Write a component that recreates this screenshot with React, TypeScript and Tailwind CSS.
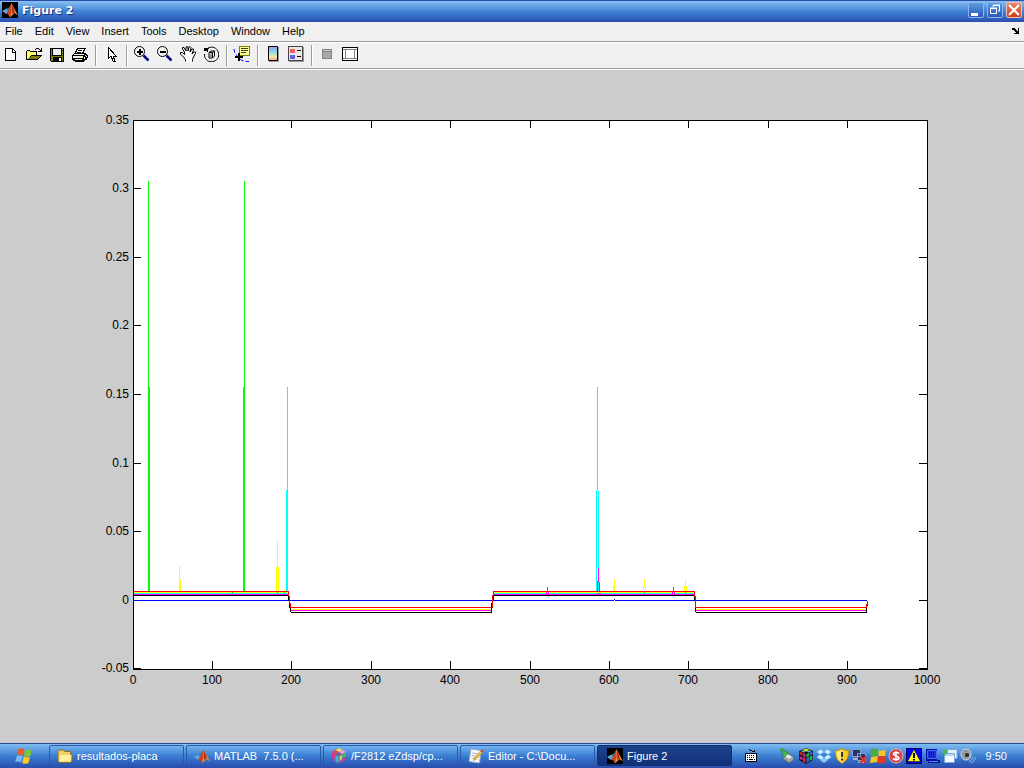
import React from 'react'

type Bar = [x: number, y: number, w: number, h: number]

const MENUS = ['File', 'Edit', 'View', 'Insert', 'Tools', 'Desktop', 'Window', 'Help']

const X_TICKS = [0, 100, 200, 300, 400, 500, 600, 700, 800, 900, 1000]
const Y_TICKS = [0.35, 0.3, 0.25, 0.2, 0.15, 0.1, 0.05, 0, -0.05]

const xPos = (v: number) => Math.floor(133 + v * 0.794)
const yPos = (v: number) => Math.round(529.8 - v * 1372)

// Plot traces as one pixel wide runs, painted in order
const TRACES: { color: string; bars: Bar[] }[] = [
  {
    color: '#0000ff',
    bars: [[134, 530, 480, 1], [614, 529, 1, 1], [615, 530, 252, 1]],
  },
  {
    color: '#00ff00',
    bars: [[148, 111, 1, 411], [149, 317, 1, 205], [244, 111, 1, 411], [243, 317, 1, 205]],
  },
  {
    color: '#00ffff',
    bars: [
      [287, 317, 1, 205], [286, 420, 1, 102],
      [597, 317, 1, 103], [596, 420, 1, 102], [598, 421, 1, 101],
      [134, 523, 155, 1], [493, 523, 201, 1],
    ],
  },
  {
    color: '#ff00ff',
    bars: [
      [134, 524, 155, 1], [290, 540, 201, 1], [493, 524, 201, 1], [696, 540, 170, 1],
      [598, 498, 1, 14], [597, 511, 1, 14], [599, 512, 1, 13], [600, 522, 1, 3],
    ],
  },
  {
    color: '#ffff00',
    bars: [
      [134, 522, 155, 1], [290, 539, 201, 1], [493, 522, 201, 1], [696, 539, 170, 1],
      [179, 496, 1, 26], [180, 510, 1, 12],
      [277, 471, 1, 27], [276, 497, 1, 25], [278, 497, 1, 25], [284, 520, 1, 2],
      [614, 509, 1, 12], [613, 516, 1, 5],
      [644, 509, 1, 8], [643, 516, 1, 5], [645, 516, 1, 5],
      [685, 509, 1, 8], [684, 516, 1, 5], [686, 516, 1, 5],
    ],
  },
  {
    color: '#000000',
    bars: [
      [134, 525, 155, 1], [288, 525, 1, 6], [289, 530, 1, 8], [290, 537, 1, 5], [291, 542, 201, 1],
      [491, 533, 1, 9], [492, 529, 1, 9], [493, 525, 1, 5], [493, 525, 202, 1],
      [694, 525, 1, 6], [695, 530, 1, 12], [696, 542, 171, 1], [866, 537, 1, 5], [867, 531, 1, 5],
    ],
  },
  {
    color: '#ff0000',
    bars: [
      [134, 521, 155, 1], [288, 521, 1, 5], [289, 526, 1, 8], [290, 533, 1, 5], [291, 537, 201, 1],
      [492, 525, 1, 12], [493, 521, 1, 5], [493, 521, 202, 1],
      [694, 521, 1, 6], [695, 526, 1, 12], [696, 537, 170, 1], [866, 534, 1, 4], [867, 531, 1, 4],
    ],
  },
  {
    color: '#ff00ff',
    bars: [
      [547, 517, 1, 4], [546, 522, 1, 3], [548, 522, 1, 3],
      [673, 517, 1, 4], [672, 522, 1, 3], [674, 522, 1, 3],
    ],
  },
  {
    color: '#00d000',
    bars: [[232, 522, 1, 1], [277, 522, 1, 1], [284, 522, 1, 1], [644, 522, 1, 1], [685, 522, 1, 1]],
  },
]

function Svg({ size = 16, children }: { size?: number; children: React.ReactNode }) {
  return (
    <svg width={size} height={size} viewBox="0 0 16 16" fill="none" className="block shrink-0" aria-hidden="true">
      {children}
    </svg>
  )
}

function MatlabIcon({ boxed = false }: { boxed?: boolean }) {
  return (
    <Svg>
      {boxed && <path d="M0 0h16v16H0z" fill="#000" />}
      <path d="M0 9 4.5 6.5 7 9.5 4 12z" fill="#58a8dc" />
      <path d="M4.5 6.5 7 5.5 9.5 1.5 8.500 7 6.500 9.500z" fill="#3a7488" />
      <path d="M9.5 1 7.5 6.500 4 11.500l2 .5 1.500 3L10 12l2-1z" fill="#cf4520" />
      <path d="M9.5 1 11.500 5 16 13.500 12.500 11 8 15.500 9.500 8z" fill="#f08a3c" />
      <path d="M10 2.500 12 7l1 4-1-.5L10 12z" fill="#b03018" />
    </Svg>
  )
}

function NewIcon() {
  return (
    <Svg>
      <g shapeRendering="crispEdges">
        <path d="M2 2h8v1h1v1h1v1h1v10H2z" fill="#000" />
        <path d="M3 3h6v4h3v7H3z" fill="#fff" />
        <path d="M10 4h1v1h1v1h-2z" fill="#fff" />
      </g>
    </Svg>
  )
}

function OpenIcon() {
  return (
    <Svg>
      <g shapeRendering="crispEdges">
        <path d="M9 3h1V2h3v1h1v1h1V2h1v4h-4V5h2V4h-1V3h-3v1H9z" fill="#000" />
        <path d="M0 5h1V4h3v1h7v4h5v1h-1v1h-1v1h-1v1h-1v1H0z" fill="#000" />
        <path d="M1 5h3v1h6v3H5v1H4v1H3v1H2v1H1z" fill="#ffff66" />
        <path d="M5 10h9v1h-1v1h-1v1H2v-1h1v-1h2z" fill="#808000" />
      </g>
    </Svg>
  )
}

function SaveIcon() {
  return (
    <Svg>
      <g shapeRendering="crispEdges">
        <path d="M1 2h14v14H2v-1H1z" fill="#000" />
        <path d="M2 3h1v7h10V5h1v10H2z" fill="#808000" />
        <path d="M4 3h8v6H4zM13 3h1v1h-1z" fill="#ececec" />
        <path d="M4 11h9v4H4z" fill="#000" />
        <path d="M10 12h2v3h-2z" fill="#fff" />
      </g>
    </Svg>
  )
}

function PrintIcon() {
  return (
    <Svg>
      <g shapeRendering="crispEdges">
        <path d="M5 2h9v1h-1v2h-1v2h2v1h1v1h1v3h-1v2h-2v1h-1v1H3v-1H1v-1H0V9h1V8h1V7h1V5h1V3h1z" fill="#000" />
        <path d="M6 3h6v1h-1v2h-1v1H4V6h1V4h1z" fill="#fff" />
        <path d="M6 4h4v1H6zM5 6h4v1H5z" fill="#000" />
        <path d="M3 8h9v1H2V8zM1 10h10v2H1zM13 9h1v1h-1zM12 11h1v2h-1zM14 10h1v1h-1zM3 13h7v1H3z" fill="#f0f0f0" />
        <path d="M7 11h3v1H7z" fill="#ffff00" />
      </g>
    </Svg>
  )
}

function PointerIcon() {
  return (
    <Svg>
      <path d="M5.5 1.5v11l2.5-2.5 2 5h2l-2-5h3z" fill="#fff" stroke="#000" shapeRendering="crispEdges" />
    </Svg>
  )
}

function ZoomIcon({ plus = false }: { plus?: boolean }) {
  return (
    <Svg>
      <path d="m9.5 9.5 5 5" stroke="#000080" strokeWidth="2.5" />
      <circle cx="5.5" cy="5.5" r="5" fill="#f4f4f4" stroke="#000" />
      <path
        d={plus ? 'M3 5h6v2H3zM5 3h2v6H5z' : 'M3 5h6v2H3z'}
        fill="#000"
        shapeRendering="crispEdges"
      />
    </Svg>
  )
}

function HandIcon() {
  return (
    <Svg>
      <path
        d="M5.5 15.5v-2l-2-2.5-3-3V6.5h2l2 2V6l-2-3V1.5H4L6 5V1l1-.5 1 .5v4l1-4 1-.5 1 1-1 4.5 2-3h1.500V4L12 8l2-2h1.500v1.500l-2 3.500-1 2.500v2z"
        fill="#fff"
      />
      <path
        d="M5.5 15.5v-2l-2-2.5-3-3V6.5h2l2 2V6l-2-3V1.5H4L6 5V1l1-.5 1 .5v4l1-4 1-.5 1 1-1 4.5 2-3h1.500V4L12 8l2-2h1.500v1.500l-2 3.500-1 2.500v2"
        stroke="#000"
      />
    </Svg>
  )
}

function RotateIcon() {
  return (
    <Svg>
      <path d="M4.5 2.5C8 0 12.500 1 14.500 4.500s1.500 8-2 10-8 1.500-10-2C1.500 11 1.500 9.500 1.500 8" stroke="#000" />
      <path d="M1 2h5v1H5v3H4V5H1z" fill="#000" shapeRendering="crispEdges" />
      <path d="m6 6.500 2-1.500h3.500v5L9.500 12H6zM6 6.500h3.500V12M9.500 6.500l2-1.500" stroke="#000" />
      <path d="M7 7.500h2V11H7z" fill="#999" />
    </Svg>
  )
}

function DataCursorIcon() {
  return (
    <svg width="16" height="16" viewBox="0 0 16 16" className="block overflow-visible" aria-hidden="true">
      <path d="M0 3c0 3 2 6 5 9s5 3.500 10 3.500" fill="none" stroke="#0000ff" strokeDasharray="4 2" />
      <g shapeRendering="crispEdges">
        <path d="M5 0h11v10H5z" fill="#808000" />
        <path d="M6 1h9v8H6z" fill="#ffffa0" />
        <path d="M7 2h7v1H7zM7 4h7v1H7zM7 6h5v1H7z" fill="#404000" />
        <path d="M4 7h2v3h3v2H6v3H4v-3H1v-2h3z" fill="#000" />
      </g>
    </svg>
  )
}

function ColorbarIcon() {
  return (
    <Svg>
      <defs>
        <linearGradient id="colorbar" x1="0" y1="0" x2="0" y2="1">
          <stop offset="0" stopColor="#9b9bea" />
          <stop offset="0.4" stopColor="#84ddea" />
          <stop offset="0.7" stopColor="#f5eda0" />
          <stop offset="1" stopColor="#f5a0a0" />
        </linearGradient>
      </defs>
      <path d="M4 1h10v15H4z" fill="#999" />
      <path d="M3.5.5h9v14h-9z" fill="url(#colorbar)" stroke="#000" />
    </Svg>
  )
}

function LegendIcon() {
  return (
    <Svg>
      <g shapeRendering="crispEdges">
        <path d="M1 1h15v15H1z" fill="#999" />
        <path d="M.5.5h14v14H.5z" fill="#eee6e6" stroke="#444" />
        <path d="M2 3h5v4H2z" fill="#e96060" />
        <path d="M2 9h5v4H2z" fill="#6060e9" />
        <path d="M9 4h4v1H9zM9 10h4v1H9z" fill="#000" />
      </g>
    </Svg>
  )
}

function HideToolsIcon() {
  return (
    <Svg>
      <g shapeRendering="crispEdges">
        <path d="M3.5 3.5h9v9h-9z" fill="#a9a9a9" stroke="#858585" />
        <path d="M4 4h8v1H4z" fill="#c8c8c8" />
        <path d="M4 5h8v1H4z" fill="#858585" />
      </g>
    </Svg>
  )
}

function ShowToolsIcon() {
  return (
    <Svg>
      <g shapeRendering="crispEdges">
        <path d="M0 1h16v14H0z" fill="#000" />
        <path d="M1 2h14v12H1z" fill="#fff" />
        <path d="M1 3h14v1H1zM3 4h1v8H3zM12 4h1v8h-1zM1 12h14v1H1z" fill="#808080" />
      </g>
    </Svg>
  )
}

const TOOL_GROUPS: { label: string; icon: React.ReactNode }[][] = [
  [
    { label: 'New Figure', icon: <NewIcon /> },
    { label: 'Open File', icon: <OpenIcon /> },
    { label: 'Save Figure', icon: <SaveIcon /> },
    { label: 'Print Figure', icon: <PrintIcon /> },
  ],
  [{ label: 'Edit Plot', icon: <PointerIcon /> }],
  [
    { label: 'Zoom In', icon: <ZoomIcon plus /> },
    { label: 'Zoom Out', icon: <ZoomIcon /> },
    { label: 'Pan', icon: <HandIcon /> },
    { label: 'Rotate 3D', icon: <RotateIcon /> },
  ],
  [{ label: 'Data Cursor', icon: <DataCursorIcon /> }],
  [
    { label: 'Insert Colorbar', icon: <ColorbarIcon /> },
    { label: 'Insert Legend', icon: <LegendIcon /> },
  ],
  [
    { label: 'Hide Plot Tools', icon: <HideToolsIcon /> },
    { label: 'Show Plot Tools', icon: <ShowToolsIcon /> },
  ],
]

function TitleBar() {
  const blue = 'h-4 w-4 rounded-[2px] border border-[#8fb5ea] bg-linear-to-b from-[#5c9be0] to-[#2c58b8]'
  return (
    <header className="flex h-[22px] items-start gap-[3px] border-t border-[#2b4da8] bg-linear-to-b from-[#86c0f3] via-[#3f84d4] to-[#2a4eb0] pt-px pr-[2px] pl-[2px]">
      <MatlabIcon boxed />
      <h1 className="flex-1 pl-px font-['DejaVu_Sans','Verdana',sans-serif] text-[11px] leading-[18px] font-bold text-white [text-shadow:1px_1px_0_#0f2f80]">
        Figure 2
      </h1>
      <button aria-label="Minimize" className={blue}>
        <svg viewBox="0 0 14 14" className="block" aria-hidden="true">
          <path d="M2 10h7v3H2z" fill="#fff" />
        </svg>
      </button>
      <button aria-label="Restore" className={blue}>
        <svg viewBox="0 0 14 14" className="block" fill="none" stroke="#fff" aria-hidden="true">
          <path d="M5 4V2.500h6.500V8H10M5 2h7" />
          <path d="M2.500 5.500h6v5h-6zM2 5h7" />
        </svg>
      </button>
      <button
        aria-label="Close"
        className="h-4 w-4 rounded-[2px] border border-[#f0c0b8] bg-linear-to-b from-[#e8886c] to-[#cc3c18]"
      >
        <svg viewBox="0 0 14 14" className="block" aria-hidden="true">
          <path d="m2 2 10 10m0-10-10 10" stroke="#fff" strokeWidth="2" />
        </svg>
      </button>
    </header>
  )
}

function MenuBar() {
  return (
    <nav className="flex h-5 items-start gap-3 border-b border-[#9d9da1] bg-[#f0f0f0] pt-px pr-1 pl-[5px]">
      {MENUS.map((name) => (
        <button key={name} className="text-[11px] leading-4 text-black">
          {name}
        </button>
      ))}
      <button aria-label="Dock Figure" className="ml-auto pt-1">
        <svg width="8" height="8" viewBox="0 0 8 8" shapeRendering="crispEdges" aria-hidden="true">
          <path d="M0 1h3v1h1v1h1v1h1V1h1v6H2V6h2V5H3V4H2V3H0z" fill="#000" />
        </svg>
      </button>
    </nav>
  )
}

function Toolbar() {
  return (
    <div role="toolbar" className="flex h-[28px] border-t border-b border-t-white border-b-white bg-[#f0f0f0]">
      <div className="-ml-px flex flex-1 border-b border-[#9d9da1]">
        {TOOL_GROUPS.map((group, i) => (
          <div key={group[0].label} className="flex">
            {i > 0 && <div className="ml-1 mr-[2px] my-[2px] w-[2px] border-l border-r border-l-[#9d9da1] border-r-white" />}
            {group.map((tool) => (
              <button key={tool.label} aria-label={tool.label} className="flex w-[23px] items-start pt-[3px] pl-1">
                {tool.icon}
              </button>
            ))}
          </div>
        ))}
      </div>
    </div>
  )
}

function Figure() {
  return (
    <main className="flex flex-1 bg-[#cccccc]">
      <svg
        viewBox="0 0 1024 673"
        className="h-auto w-full font-['Liberation_Sans',Arial,sans-serif]"
        shapeRendering="crispEdges"
        role="img"
        aria-label="Figure 2 plot"
      >
        <rect x="133.5" y="50.5" width="794" height="549" fill="#fff" stroke="#000" />
        {X_TICKS.map((v) => (
          <g key={v}>
            <rect x={xPos(v)} y="50" width="1" height="8" />
            <rect x={xPos(v)} y="591" width="1" height="8" />
            <text x={xPos(v)} y="614" fontSize="12" textAnchor="middle">
              {v}
            </text>
          </g>
        ))}
        {Y_TICKS.map((v) => (
          <g key={v}>
            <rect x="134" y={yPos(v)} width="7" height="1" />
            <rect x="919" y={yPos(v)} width="8" height="1" />
            <text x="129" y={yPos(v) + 4} fontSize="12" textAnchor="end">
              {v}
            </text>
          </g>
        ))}
        {TRACES.map((trace, i) => (
          <g key={i} fill={trace.color}>
            {trace.bars.map(([x, y, w, h]) => (
              <rect key={`${x}-${y}-${w}`} x={x} y={y} width={w} height={h} />
            ))}
          </g>
        ))}
      </svg>
    </main>
  )
}

function FolderIcon() {
  return (
    <Svg>
      <path d="M1 3.500 2.500 2h4L8 3.500h5.500V6L15 7v6l-1.500 1.500h-11L1 13z" fill="#f3d264" stroke="#8b6b1c" />
      <path d="M3 7h11.500L13 13.500H2.500z" fill="#fff1a0" />
    </Svg>
  )
}

function CubeIcon() {
  return (
    <Svg>
      <path d="M8 0 15 4v8l-7 4-7-4V4z" fill="#7a5aa0" />
      <path d="m8 0 3.500 2L8 4 4.500 2z" fill="#f4e05c" />
      <path d="m4.500 2 3.500 2-3.500 2L1 4z" fill="#e04c4c" />
      <path d="M11.500 2 15 4l-3.500 2L8 4z" fill="#f2a8dc" />
      <path d="m1 5 3 1.500v4L1 9zM11.500 11 15 9v3l-3.500 2z" fill="#e02f92" />
      <path d="m4.500 7 3 1.500V15l-3-2z" fill="#39b9d8" />
      <path d="m8.500 8 2.500-1.500v5L8.500 13z" fill="#b1d850" />
      <path d="M11.500 6 15 4v4.500l-3.500 2z" fill="#46b65c" />
    </Svg>
  )
}

function EditorIcon() {
  return (
    <Svg>
      <path d="m3 1 10 1.500-1.500 12.500L1 13.500z" fill="#f8f8f8" stroke="#9bb0c8" />
      <path d="m4 5 6 1M4 7.500l5 .8M3.500 10l5 .8" stroke="#a9b5c0" />
      <path d="M6 10.500 12.500 3l2 1.500-6.500 7-2.500 1z" fill="#f2bd4c" stroke="#ae7428" strokeWidth=".5" />
      <path d="m12.500 3 1-1.500L15.500 3l-1 1.500z" fill="#d83b2c" />
    </Svg>
  )
}

function StartFlag() {
  return (
    <svg width="18" height="18" viewBox="0 0 18 18" className="block" aria-hidden="true">
      <path d="M3.500 2c2-1.200 4-1 6 .2L8 8.500C6 7.300 4 7.300 2 8.300z" fill="#ee5a28" />
      <path d="M10.300 2.500c2 1 4 1 6.500 0L15.300 9c-2 1-4 1-6.300-.1z" fill="#7cc832" />
      <path d="M1.700 9c2-1 4-1 6 .1L6.200 15.500c-2-1.300-4-1.300-6-.2z" fill="#7ab8ff" />
      <path d="M8.700 9.600c2 1 4 1.200 6.300.1L13.500 16c-2 1-4 1-6.300-.1z" fill="#ffc928" />
    </svg>
  )
}

const TASKS = [
  { label: 'resultados-placa', icon: <FolderIcon /> },
  { label: 'MATLAB  7.5.0 (...', icon: <MatlabIcon /> },
  { label: '/F2812 eZdsp/cp...', icon: <CubeIcon /> },
  { label: 'Editor - C:\\Docu...', icon: <EditorIcon /> },
  { label: 'Figure 2', icon: <MatlabIcon boxed />, active: true },
]

const TRAY: { label: string; icon: React.ReactNode }[] = [
  {
    label: 'Safely Remove Hardware',
    icon: (
      <Svg>
        <path d="m3 8 5-3 6 4v3l-5 3-6-4z" fill="#9ba5a8" stroke="#47565c" strokeWidth=".7" />
        <path d="m5 8 3-1.500 4 2.500-3 2z" fill="#e5ebec" />
        <path d="M0 1h4v2l4 1-3 5-4-3h2V3H0z" fill="#45c03c" stroke="#197c24" strokeWidth=".5" />
      </Svg>
    ),
  },
  {
    label: 'Cube',
    icon: (
      <Svg>
        <path d="m8 0 7 3v9l-7 4-7-4V3z" fill="#111" />
        <path d="m1.500 3.500 3 1v3l-3-1z" fill="#e02020" />
        <path d="m5 5 2.500 1v3.500L5 8.300zM1.500 8l3 1v3.500l-3-1.500z" fill="#c0249b" />
        <path d="m5 9 2.500 1.200V15L5 13.500z" fill="#f02020" />
        <path d="m8.500 6 2.500-1v3.300L8.500 9.500zM11.500 8.500l3-1v4l-3 1.500z" fill="#22b843" />
        <path d="m11.500 4.500 3-1v3l-3 1zM8.500 10 11 9v4.500L8.500 15z" fill="#2c5fe8" />
        <path d="m8 .5 3.500 1.500L8 3.500 4.500 2z" fill="#e4dc35" />
        <path d="m4.500 2.300 3 1.300-1.500 1-3-1.400zM11.500 2.300l2 .9-3 1.200-2-.9z" fill="#35c7d8" />
      </Svg>
    ),
  },
  {
    label: 'Dropbox',
    icon: (
      <Svg>
        <path d="M5 1 .5 4 4 6.500 8 4zM11 1l4.500 3L12 6.500 8 4zM.5 9 5 12l3-2.500L4 6.500zM15.500 9 11 12 8 9.500l4-3z" fill="#d4eeff" stroke="#4aa3e3" strokeWidth=".5" />
        <path d="m4 12 4-2 4 2-4 3z" fill="#8fcbf4" />
      </Svg>
    ),
  },
  {
    label: 'Security Alerts',
    icon: (
      <Svg>
        <path d="M8 .5c2 1.500 4 2 6.500 2 0 7-1.500 10-6.500 13C3 12.500 1.500 9.500 1.500 2.500 4 2.500 6 2 8 .5z" fill="#f8cc20" stroke="#c08f18" />
        <path d="M8 1.500v13C4 12 2.500 9 2.500 3.500c2 0 4-.5 5.500-2z" fill="#ffe978" />
        <path d="M7 4h2v5H7zM7 10.500h2v2H7z" fill="#333" />
      </Svg>
    ),
  },
  {
    label: 'Network Disconnected',
    icon: (
      <Svg>
        <path d="M.5 1.500h8v7h-8zM5.500 5.500h8v7h-8z" fill="#26346c" stroke="#8ca0c8" />
        <path d="M1 10h4v2H1zM6 13.500h6V15H6z" fill="#a8b4cc" />
        <path d="m8.500 8.500 6 6.500m0-6.500-6 6.500" stroke="#e2332a" strokeWidth="2.200" />
      </Svg>
    ),
  },
  {
    label: 'Windows Update',
    icon: (
      <Svg>
        <path d="M1 1 7.500.5v7.500H.5z" fill="#47ae37" />
        <path d="m8.500 3 7-1v6h-7z" fill="#f4c526" />
        <path d="m1 9 6.500-1v6L0 15z" fill="#f4c526" />
        <path d="m8 8.500 7.500-.5v7L8 15.500z" fill="#dc3d26" />
      </Svg>
    ),
  },
  {
    label: 'Currency',
    icon: (
      <Svg>
        <circle cx="8" cy="8" r="7" fill="#d4444c" stroke="#f0a7aa" />
        <path d="M11 5.500C10 4 5.500 4 5.500 6S11 8 11 10s-4.500 2.200-6 .4M8 3v10" stroke="#fff" strokeWidth="1.500" />
      </Svg>
    ),
  },
  {
    label: 'Warning',
    icon: (
      <Svg>
        <path d="M0 0h16v16H0z" fill="#00f" />
        <path d="M.5.5h15v15H.5z" stroke="#000060" />
        <path d="m8 1.500 6.500 12h-13z" fill="#ff0" stroke="#000" strokeWidth=".5" />
        <path d="M7 5h2v5H7zM7 11h2v1.500H7z" fill="#000" />
      </Svg>
    ),
  },
  {
    label: 'Processor',
    icon: (
      <Svg>
        <path d="M2 1h11v11h3v3H4v-2H2z" fill="#0010a0" />
        <path d="M3.500 2.500h9v8h-9z" fill="#1c30d8" stroke="#4c68e8" />
        <path d="M5 4.500h6M5 6.500h6M5 8.500h6" stroke="#000c70" strokeDasharray="1 1" />
        <path d="M5 13.500h9" stroke="#6c88f0" />
      </Svg>
    ),
  },
  {
    label: 'Windows',
    icon: (
      <Svg>
        <path d="M5.500 1.500H15v9H5.500z" fill="#e4f0fa" stroke="#7bacdc" />
        <path d="M2.500 5.500h10v9h-10z" fill="#f5faff" stroke="#79aada" />
        <path d="M3 6h9v2H3z" fill="#b4d4f4" />
        <path d="m0 5 3-4 3 3H4v3H2V5z" fill="#4cba3c" />
      </Svg>
    ),
  },
  {
    label: 'Volume',
    icon: (
      <Svg>
        <ellipse cx="6" cy="6.500" rx="5" ry="5.500" fill="#8b9299" stroke="#dadfe2" />
        <circle cx="7" cy="7" r="2.800" fill="#2e343a" stroke="#a9b0b6" />
        <path d="M9 13.500c2-.8 3.500-2.500 4-4.500M11 15c2-1 4-3 4.500-5.500" stroke="#a0c4f4" />
      </Svg>
    ),
  },
]

function Taskbar() {
  return (
    <footer className="flex h-[25px] items-start border-t border-[#28489c] bg-linear-to-b from-[#80bdf1] via-[#3b7fd0] to-[#2a4cae] pt-px text-white">
      <button aria-label="Start" className="flex h-[22px] w-12 items-center justify-center">
        <StartFlag />
      </button>
      <div className="ml-px flex gap-[2px]">
        {TASKS.map((task) => (
          <button
            key={task.label}
            className={`flex h-[21px] w-[135px] items-center gap-1 rounded-[2px] border text-left ${
              task.active
                ? 'border-[#142e70] bg-linear-to-b from-[#1e438c] to-[#103078] pt-px pl-[9px]'
                : 'border-[#2b58a8] bg-linear-to-b from-[#74b3ee] via-[#3c80d4] to-[#2c56b8] pl-[7px]'
            }`}
          >
            {task.icon}
            <span className="truncate text-[11px] leading-4 whitespace-pre">{task.label}</span>
          </button>
        ))}
      </div>
      <div className="ml-auto flex h-[21px] items-center pr-[17px]">
        <button aria-label="Keyboard layout" className="mr-[22px]">
          <svg width="13" height="14" viewBox="0 0 13 14" className="block" shapeRendering="crispEdges" aria-hidden="true">
            <path d="M4 0h1v1h2v1h2V1h1v2H7V2H5V1H4z" fill="#000" />
            <path d="M0 4h12v9H0z" fill="#000" />
            <path d="M1 5h10v7H1z" fill="#fff" />
            <path d="M2 6h1v1H2zM4 6h1v1H4zM6 6h1v1H6zM8 6h1v1H8zM2 8h1v1H2zM4 8h1v1H4zM6 8h1v1H6zM8 8h1v1H8zM2 10h1v1H2zM4 10h4v1H4zM9 10h1v1H9z" fill="#000" />
          </svg>
        </button>
        <div className="flex gap-[2px]">
          {TRAY.map((item) => (
            <button key={item.label} aria-label={item.label}>
              {item.icon}
            </button>
          ))}
        </div>
        <time className="ml-[10px] text-[11px] leading-4">9:50</time>
      </div>
    </footer>
  )
}

export default function App() {
  return (
    <div className="flex min-h-screen flex-col bg-[#cccccc] font-['Liberation_Sans',Arial,sans-serif]">
      <TitleBar />
      <MenuBar />
      <Toolbar />
      <Figure />
      <Taskbar />
    </div>
  )
}
